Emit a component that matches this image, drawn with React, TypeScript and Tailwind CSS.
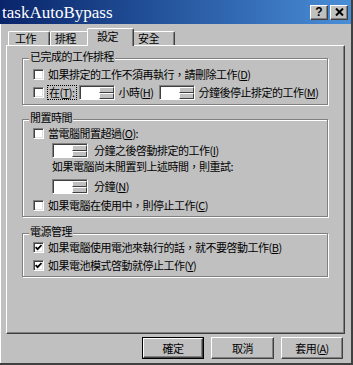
import React from "react";

function Checkbox({ checked = false }: { checked?: boolean }) {
  return (
    <div className="w-[11px] h-[11px] shrink-0 bg-white border border-t-[#808080] border-l-[#808080] border-r-white border-b-white shadow-[inset_1px_1px_0_#404040,inset_-1px_-1px_0_#dfdfdf] flex items-center justify-center">
      {checked && (
        <svg width="7" height="7" viewBox="0 0 7 7">
          <path d="M0.6 3.1 L2.6 5.2 L6.5 1.1" stroke="#000" strokeWidth="1.7" fill="none" />
        </svg>
      )}
    </div>
  );
}

function Spin() {
  return (
    <div className="w-[36px] h-[15px] shrink-0 bg-white border border-t-[#808080] border-l-[#808080] border-r-white border-b-white shadow-[inset_1px_1px_0_#404040] flex justify-end pt-[1px] pb-0 pr-0">
      <div className="w-[15px] flex flex-col">
        <div className="flex-1 bg-[#c0c0c0] border border-t-white border-l-white border-r-[#404040] border-b-[#404040]" />
        <div className="flex-1 bg-[#c0c0c0] border border-t-white border-l-white border-r-[#404040] border-b-[#404040]" />
      </div>
    </div>
  );
}

function Group({
  label,
  className,
  children,
}: {
  label: string;
  className: string;
  children: React.ReactNode;
}) {
  return (
    <div
      className={
        "relative ml-[15px] w-[306px] shrink-0 border border-[#808080] shadow-[inset_1px_1px_0_#fff,1px_1px_0_#fff] pl-[10px] flex flex-col " +
        className
      }
    >
      <span className="absolute left-[6px] top-[-8px] bg-[#c0c0c0] px-[1px] leading-none">{label}</span>
      {children}
    </div>
  );
}

function Btn({ children, def = false, w }: { children: React.ReactNode; def?: boolean; w: string }) {
  const inner = (
    <div className="flex-1 h-full border border-t-white border-l-white border-r-[#404040] border-b-[#404040] shadow-[inset_-1px_-1px_0_#808080] flex items-center justify-center">
      {children}
    </div>
  );
  return def ? (
    <div className={"h-[22px] border border-black flex " + w}>{inner}</div>
  ) : (
    <div className={"h-[22px] flex " + w}>{inner}</div>
  );
}

export default function App() {
  return (
    <div className="w-[353px] h-[365px] bg-[#c0c0c0] border-r-2 border-b-2 border-r-[#404040] border-b-[#404040] shadow-[inset_1px_0_0_#fff] flex flex-col overflow-hidden font-['Noto_Sans_CJK_TC','Noto_Sans',sans-serif] text-[11px] tracking-[-0.5px] text-black leading-none">
      {/* Title bar */}
      <div className="h-[24px] shrink-0 flex items-center justify-between bg-linear-to-r from-[#0a246a] to-[#4a8ed8] pl-[2px] pr-[3px] tracking-normal">
        <span className="font-['Liberation_Serif',serif] text-[17px] text-white leading-none">taskAutoBypass</span>
        <div className="flex gap-[2px]">
          <div className="w-[18px] h-[15px] bg-[#c0c0c0] border border-t-white border-l-white border-r-[#404040] border-b-[#404040] shadow-[inset_-1px_-1px_0_#808080] flex items-center justify-center font-['Liberation_Sans',sans-serif] font-bold text-[12px] leading-none">
            ?
          </div>
          <div className="w-[18px] h-[15px] bg-[#c0c0c0] border border-t-white border-l-white border-r-[#404040] border-b-[#404040] shadow-[inset_-1px_-1px_0_#808080] flex items-center justify-center">
            <svg width="9" height="8" viewBox="0 0 9 8">
              <path d="M1 0.5 L8 7.5 M8 0.5 L1 7.5" stroke="#000" strokeWidth="2" />
            </svg>
          </div>
        </div>
      </div>

      {/* Tabs */}
      <div className="relative z-10 h-[17px] mt-[4px] pl-[8px] flex items-end shrink-0">
        <div className="w-[42px] h-[14px] border-t border-l border-r border-t-white border-l-white border-r-[#404040] rounded-t-[2px] shadow-[inset_-1px_0_0_#808080] pl-[6px] flex items-center">
          工作
        </div>
        <div className="w-[39px] h-[14px] border-t border-l border-r border-t-white border-l-white border-r-[#404040] rounded-t-[2px] shadow-[inset_-1px_0_0_#808080] pl-[4px] flex items-center">
          排程
        </div>
        <div className="relative z-10 w-[47px] h-[18px] -mb-[1px] -mx-[2px] bg-[#c0c0c0] border-t border-l border-r border-t-white border-l-white border-r-[#404040] rounded-t-[2px] shadow-[inset_-1px_0_0_#808080] pl-[9px] pt-[2px] flex items-start">
          設定
        </div>
        <div className="w-[43px] h-[14px] border-t border-l border-r border-t-white border-l-white border-r-[#404040] rounded-t-[2px] shadow-[inset_-1px_0_0_#808080] pl-[5px] flex items-center">
          安全
        </div>
      </div>

      {/* Panel */}
      <div className="ml-[6px] w-[339px] h-[289px] shrink-0 border border-t-white border-l-white border-r-[#404040] border-b-[#404040] shadow-[inset_-1px_-1px_0_#808080] flex flex-col">
        <Group label="已完成的工作排程" className="mt-[12px] h-[47px] pt-[6px]">
          <div className="h-[18px] flex items-center gap-[4px]">
            <Checkbox />
            <span>
              如果排定的工作不須再執行，請刪除工作(<u>D</u>)
            </span>
          </div>
          <div className="h-[18px] flex items-center">
            <Checkbox />
            <span className="ml-[3px] border border-dotted border-black px-[1px] py-[1px]">
              在(<u>T</u>):
            </span>
            <div className="ml-[2px]">
              <Spin />
            </div>
            <span className="ml-[4px]">
              小時(<u>H</u>)
            </span>
            <div className="ml-[5px]">
              <Spin />
            </div>
            <span className="ml-[4px]">
              分鐘後停止排定的工作(<u>M</u>)
            </span>
          </div>
        </Group>

        <Group label="閒置時間" className="mt-[14px] h-[98px] pt-[5px]">
          <div className="h-[17px] flex items-center gap-[4px]">
            <Checkbox />
            <span>
              當電腦閒置超過(<u>O</u>):
            </span>
          </div>
          <div className="h-[17px] flex items-center gap-[6px] pl-[19px]">
            <Spin />
            <span>
              分鐘之後啓動排定的工作(<u>I</u>)
            </span>
          </div>
          <div className="h-[14px] flex items-center pl-[19px]">如果電腦尚未閒置到上述時間，則重試:</div>
          <div className="h-[26px] flex items-center gap-[6px] pl-[19px]">
            <Spin />
            <span>
              分鐘(<u>N</u>)
            </span>
          </div>
          <div className="h-[13px] flex items-center gap-[4px]">
            <Checkbox />
            <span>
              如果電腦在使用中，則停止工作(<u>C</u>)
            </span>
          </div>
        </Group>

        <Group label="電源管理" className="mt-[16px] h-[44px] pt-[4px]">
          <div className="h-[18px] flex items-center gap-[4px]">
            <Checkbox checked />
            <span>
              如果電腦使用電池來執行的話，就不要啓動工作(<u>B</u>)
            </span>
          </div>
          <div className="h-[19px] flex items-center gap-[4px]">
            <Checkbox checked />
            <span>
              如果電池模式啓動就停止工作(<u>Y</u>)
            </span>
          </div>
        </Group>
      </div>

      {/* Buttons */}
      <div className="mt-[3px] flex justify-end gap-[7px] pr-[8px] shrink-0">
        <Btn def w="w-[62px]">確定</Btn>
        <Btn w="w-[63px]">取消</Btn>
        <Btn w="w-[62px]">
          套用(<u>A</u>)
        </Btn>
      </div>
    </div>
  );
}
